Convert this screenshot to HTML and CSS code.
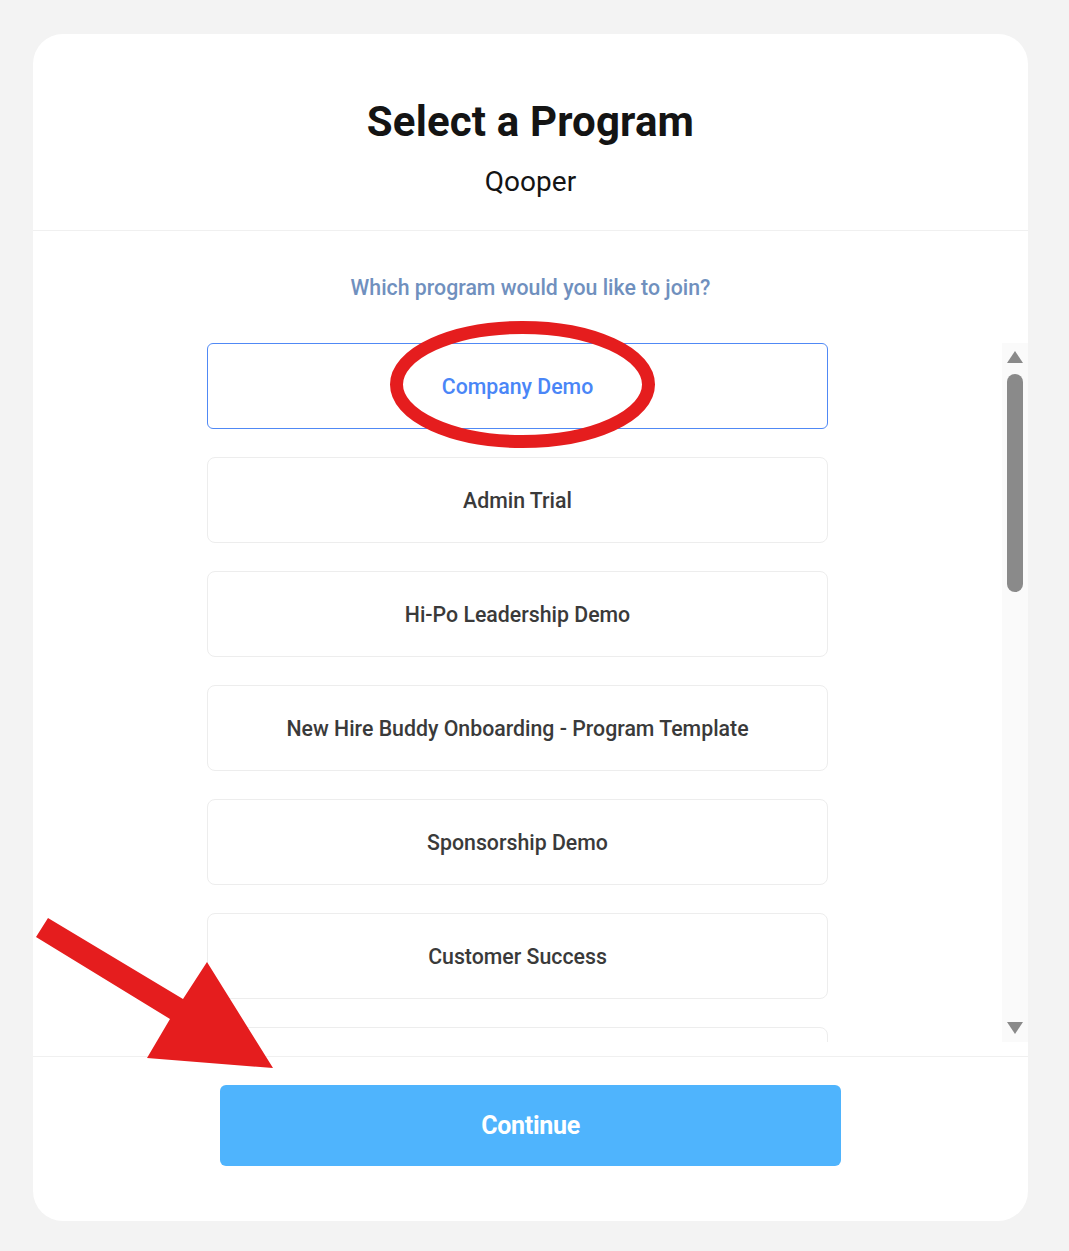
FILE: index.html
```html
<!DOCTYPE html>
<html lang="en">
<head>
<meta charset="utf-8">
<title>Select a Program</title>
<link rel="stylesheet" href="styles.css">
</head>
<body>
<div class="page">
  <div class="card">
    <header class="card-header">
      <h1 class="title">Select a Program</h1>
      <div class="org">Qooper</div>
    </header>
    <section class="card-body">
      <p class="question">Which program would you like to join?</p>
      <div class="scroller">
        <div class="viewport">
          <ul class="programs">
            <li class="program selected">Company Demo</li>
            <li class="program">Admin Trial</li>
            <li class="program">Hi-Po Leadership Demo</li>
            <li class="program">New Hire Buddy Onboarding - Program Template</li>
            <li class="program">Sponsorship Demo</li>
            <li class="program">Customer Success</li>
            <li class="program" aria-hidden="true"></li>
          </ul>
        </div>
        <div class="scrollbar">
          <span class="sb-arrow up"></span>
          <div class="sb-track"><div class="sb-thumb"></div></div>
          <span class="sb-arrow down"></span>
        </div>
      </div>
    </section>
    <footer class="card-footer">
      <button class="continue">Continue</button>
    </footer>
  </div>
  <svg class="annotations" width="1069" height="1251" viewBox="0 0 1069 1251">
    <ellipse cx="522.5" cy="384.5" rx="126" ry="57" fill="none" stroke="#e51d1e" stroke-width="13"/>
    <polygon points="48,918 183,999 207,962 273,1068 147,1058 170,1019 36,937" fill="#e51d1e"/>
  </svg>
</div>
</body>
</html>
```

FILE: styles.css
```css
* { box-sizing: border-box; }
html, body { margin: 0; padding: 0; }
body {
  background: #f3f3f3;
  font-family: Roboto, "Liberation Sans", sans-serif;
}
.page {
  position: relative;
  width: 1069px;
  height: 1251px;
  padding: 34px 41px 30px 33px;
}
.card {
  background: #ffffff;
  border-radius: 30px;
  height: 1187px;
  display: flex;
  flex-direction: column;
  overflow: hidden;
}
.card-header {
  padding: 63px 0 31px;
  border-bottom: 1px solid #f0f0f0;
  text-align: center;
}
.title {
  margin: 0;
  font-size: 42px;
  line-height: 50px;
  font-weight: 700;
  letter-spacing: 0.15px;
  color: #141414;
}
.org {
  margin-top: 18px;
  font-size: 28px;
  line-height: 34px;
  font-weight: 400;
  color: #141414;
}
.card-body {
  padding-top: 44px;
  padding-bottom: 14px;
  border-bottom: 1px solid #f0f0f0;
}
.question {
  margin: 0 0 42px;
  text-align: center;
  font-size: 21.3px;
  line-height: 26px;
  font-weight: 500;
  color: #7090be;
}
.scroller {
  display: flex;
  height: 699px;
}
.viewport {
  flex: 1;
  overflow: hidden;
}
.programs {
  list-style: none;
  margin: 0 auto;
  padding: 0;
  width: 621px;
  display: flex;
  flex-direction: column;
  gap: 28px;
}
.program {
  height: 86px;
  flex: none;
  display: flex;
  align-items: center;
  justify-content: center;
  border: 1px solid #ededed;
  border-radius: 8px;
  font-size: 21.3px;
  font-weight: 500;
  color: #3a3a3a;
}
.program.selected {
  border-color: #5089f5;
  border-radius: 6px;
  color: #4a86f7;
}
.scrollbar {
  width: 26px;
  background: #fafafa;
  display: flex;
  flex-direction: column;
  align-items: center;
  padding: 8px 0;
}
.sb-arrow {
  width: 0;
  height: 0;
  border-left: 8px solid transparent;
  border-right: 8px solid transparent;
  flex: none;
}
.sb-arrow.up { border-bottom: 12px solid #8a8a8a; }
.sb-arrow.down { border-top: 12px solid #8a8a8a; }
.sb-track {
  flex: 1;
  width: 16px;
  padding-top: 11px;
}
.sb-thumb {
  width: 16px;
  height: 218px;
  border-radius: 8px;
  background: #8a8a8a;
}
.card-footer {
  flex: 1;
  display: flex;
  justify-content: center;
  align-items: flex-start;
  padding-top: 28px;
}
.continue {
  width: 621px;
  height: 81px;
  border: none;
  border-radius: 6px;
  background: #4fb4fd;
  color: #ffffff;
  font-family: Roboto, "Liberation Sans", sans-serif;
  font-size: 25px;
  font-weight: 700;
  letter-spacing: -0.3px;
}
.annotations {
  position: absolute;
  top: 0;
  left: 0;
  pointer-events: none;
}
```
